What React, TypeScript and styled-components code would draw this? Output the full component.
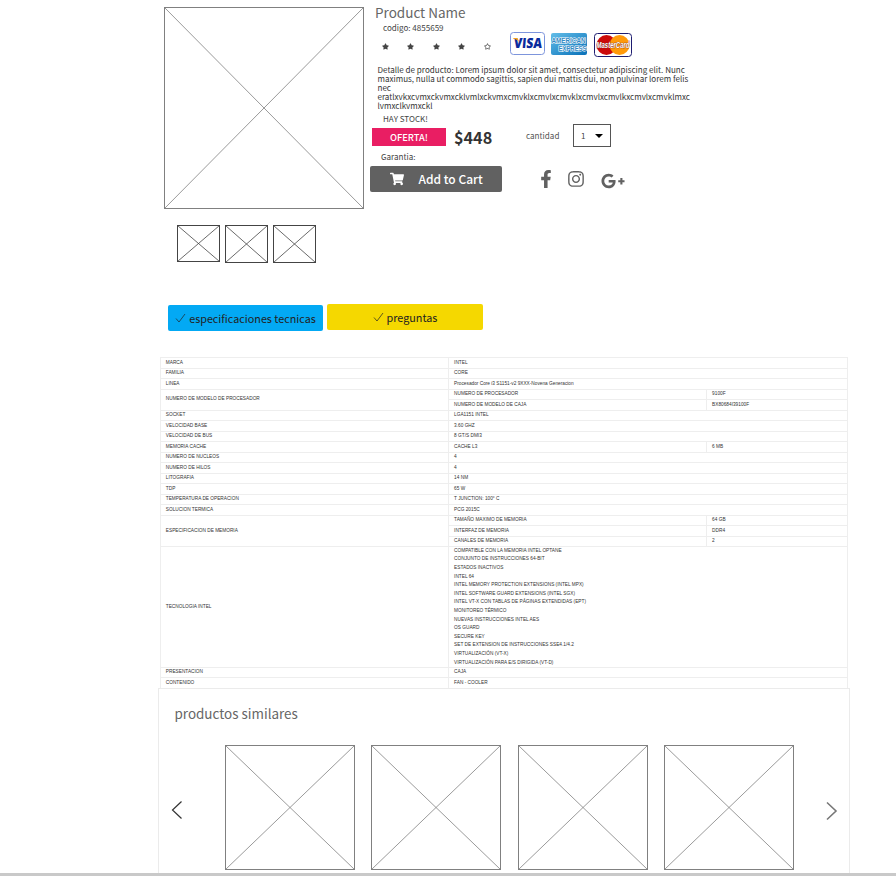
import React from "react";
import styled, { createGlobalStyle } from "styled-components";
import { FaFacebookF, FaInstagram, FaGooglePlusG, FaShoppingCart, FaStar, FaRegStar } from "react-icons/fa";

const sans = `"Noto Sans CJK SC", "Open Sans", sans-serif`;

const GlobalStyle = createGlobalStyle`
  * { box-sizing: border-box; }
  body { margin: 0; background: #fff; font-family: ${sans}; color: #333; overflow: hidden; }
`;

const Page = styled.main`
  width: 896px;
  height: 876px;
  display: flex;
  flex-direction: column;
  overflow: hidden;
  border-bottom: 3px solid #c9c9c9;
`;

const Product = styled.section`
  display: flex;
  height: 225px;
  padding-left: 164px;
`;

const Gallery = styled.div`
  width: 206px;
  padding-top: 7px;
  flex: none;
`;

const Info = styled.div`
  width: 330px;
  display: flex;
  flex-direction: column;
`;

const Sketch = styled.svg`
  display: block;
  flex: none;
  fill: none;
`;

const Title = styled.h1`
  margin: 0;
  padding-left: 5px;
  height: 23px;
  line-height: 24px;
  font-size: 13.5px;
  font-weight: 400;
  color: #666;
`;

const Note = styled.div<{ $indent: number; $height: number }>`
  flex: none;
  padding-left: ${(p) => p.$indent}px;
  height: ${(p) => p.$height}px;
  line-height: ${(p) => p.$height}px;
  font-size: 8.05px;
  color: #444;
  white-space: nowrap;
`;

const RatingRow = styled.div`
  display: flex;
  height: 32px;
  padding-left: 11.5px;
`;

const Stars = styled.div`
  display: flex;
  gap: 18.5px;
  width: 128.5px;
  padding-top: 9.5px;
  color: #444;
  svg { width: 7px; height: 7px; flex: none; }
`;

const Cards = styled.div`
  display: flex;
  align-items: flex-start;
  gap: 6px;
  margin-top: -1px;
  svg { flex: none; overflow: visible; }
`;

const Description = styled.p`
  margin: 0;
  padding: 0 0 0 7.5px;
  height: 47px;
  font-size: 8.05px;
  line-height: 9.1px;
  color: #333;
  white-space: nowrap;
`;

const Line = styled.span`
  display: block;
`;

const PriceRow = styled.div`
  display: flex;
  align-items: center;
  height: 24px;
  padding-left: 2px;
`;

const Offer = styled.div`
  width: 74px;
  height: 18px;
  line-height: 18px;
  background: #e91e63;
  color: #fff;
  text-align: center;
  font-size: 9.3px;
  font-weight: 500;
`;

const Price = styled.strong`
  width: 72px;
  padding-left: 8px;
  font-size: 16.2px;
  line-height: 20px;
  font-weight: 700;
  color: #333;
`;

const QuantityLabel = styled.label`
  width: 55px;
  padding-left: 8px;
  margin-top: -3px;
  font-size: 8.1px;
  color: #555;
`;

const Quantity = styled.div`
  display: flex;
  align-items: center;
  justify-content: space-between;
  width: 38px;
  height: 23px;
  margin-top: -3px;
  padding: 0 7px 0 7px;
  border: 1px solid #555;
  font-size: 8.1px;
  color: #444;
`;

const ActionRow = styled.div`
  display: flex;
  height: 28px;
  padding-top: 1px;
`;

const CartButton = styled.button`
  display: flex;
  align-items: center;
  gap: 14.5px;
  width: 132px;
  height: 26px;
  margin: 0 34.5px 0 0;
  padding: 0 0 0 20px;
  border: 0;
  border-radius: 2px;
  background: #616161;
  color: #fff;
  font: 500 12px ${sans};
  line-height: 26px;
  white-space: nowrap;
`;

const Social = styled.div`
  display: flex;
  align-items: center;
  gap: 12px;
  margin-top: -1px;
  color: #616161;
  svg { flex: none; }
  svg:last-child { margin: 4px 0 0 4.5px; }
`;

const Thumbs = styled.div`
  display: flex;
  gap: 5px;
  height: 79px;
  padding-left: 177px;
`;

const Tabs = styled.nav`
  display: flex;
  gap: 4px;
  height: 53px;
  padding-left: 168px;
`;

const Tab = styled.div<{ $color: string; $drop: number; $width: number }>`
  display: flex;
  align-items: center;
  justify-content: center;
  gap: 3px;
  width: ${(p) => p.$width}px;
  height: 26px;
  margin-top: ${(p) => p.$drop}px;
  border-radius: 2px;
  background: ${(p) => p.$color};
  color: #222;
  font-size: 10.8px;
  white-space: nowrap;
`;

const Specs = styled.div`
  display: grid;
  grid-template-columns: 288.3px 258px 141.7px;
  grid-template-rows: repeat(18, 10.5px) 120.6px repeat(2, 10.5px);
  width: 688.4px;
  height: 331px;
  flex: none;
  margin-left: 160px;
  border-right: 1px solid #eee;
  font: 4.75px "Liberation Sans", Arial, sans-serif;
  color: #333;
`;

const Cell = styled.div<{ $rows?: number; $cols?: number }>`
  grid-row: span ${(p) => p.$rows ?? 1};
  grid-column: span ${(p) => p.$cols ?? 1};
  display: flex;
  flex-direction: column;
  justify-content: center;
  padding: 0.3px 0 0 4.8px;
  border-top: 1px solid #eee;
  border-left: 1px solid #eee;
  line-height: 8.6px;
  white-space: nowrap;
`;

const Similar = styled.section`
  width: 692px;
  flex: 1;
  margin-left: 158px;
  border: 1px solid #ebebeb;
  border-width: 1px 1px 0;
`;

const SimilarTitle = styled.h2`
  margin: 0;
  padding-left: 15.5px;
  height: 55px;
  line-height: 48px;
  font-size: 13.45px;
  font-weight: 400;
  color: #666;
`;

const Carousel = styled.div`
  display: flex;
  align-items: center;
  height: 126px;
  padding-left: 10.5px;
`;

const Items = styled.div`
  display: flex;
  gap: 16.4px;
  margin: 0 30.5px 0 41.5px;
`;

const ArrowButton = styled.button`
  flex: none;
  margin: 6px 0 0;
  padding: 0;
  border: 0;
  background: none;
`;

function Placeholder({ w, h, color }: { w: number; h: number; color: string }) {
  return (
    <Sketch width={w} height={h} stroke={color}>
      <rect x=".5" y=".5" width={w - 1} height={h - 1} />
      <path d={`M.5 .5L${w - 0.5} ${h - 0.5}M${w - 0.5} .5L.5 ${h - 0.5}`} strokeWidth=".8" />
    </Sketch>
  );
}

function Arrow({ flip }: { flip?: boolean }) {
  return (
    <ArrowButton aria-label={flip ? "siguiente" : "anterior"}>
      <Sketch width="14" height="22" stroke={flip ? "#777" : "#333"} strokeWidth={flip ? 1.6 : 1.2}>
        <path d={flip ? "M2 3.5L11 12L2 20.5" : "M11.5 2.5L2.5 11L11.5 19.5"} />
      </Sketch>
    </ArrowButton>
  );
}

function Check() {
  return (
    <Sketch width="11" height="10" stroke="#222" strokeWidth=".7">
      <path d="M1 5.5L4 9L10 1" />
    </Sketch>
  );
}

function Visa() {
  return (
    <svg width="35" height="23">
      <rect x=".5" y=".5" width="34" height="22" rx="3" fill="#fff" stroke="#7d95dc" />
      <text x="4" y="16.3" textLength="28" lengthAdjust="spacingAndGlyphs" transform="skewX(-5) translate(1 0)" fontFamily="Open Sans, sans-serif" fontSize="14" fontWeight="800" fill="#0a2a9c">VISA</text>
      <path d="M3 6H7.5L9.5 10.5Q7 7 3 6.5Z" fill="#f7a21b" />
    </svg>
  );
}

function Amex() {
  return (
    <svg width="37" height="24">
      <defs>
        <linearGradient id="amex" x1="0" y1="0" x2="1" y2="1">
          <stop offset="0" stopColor="#62bde8" />
          <stop offset="1" stopColor="#0870b8" />
        </linearGradient>
      </defs>
      <rect x="0" y="1" width="36" height="22" rx="2" fill="url(#amex)" />
      <g fontFamily="Liberation Sans, sans-serif" fontSize="7" fontWeight="700" fill="#3189c4" stroke="#fff" strokeWidth="1.2" paintOrder="stroke">
        <text x=".5" y="11.3" textLength="34" lengthAdjust="spacingAndGlyphs">AMERICAN</text>
        <text x="7.5" y="18.6" textLength="28" lengthAdjust="spacingAndGlyphs">EXPRESS</text>
      </g>
    </svg>
  );
}

function MasterCard() {
  return (
    <svg width="38" height="25">
      <rect x=".5" y="1.5" width="37" height="23" rx="3" fill="#fff" stroke="#1d1c70" />
      <circle cx="12.5" cy="13" r="10" fill="#cc0a0a" />
      <circle cx="25.5" cy="13" r="10" fill="#ff9a0a" />
      <text x="2.5" y="16.2" textLength="33" lengthAdjust="spacingAndGlyphs" fontFamily="Liberation Sans, sans-serif" fontSize="8.5" fontWeight="700" fontStyle="italic" fill="#fff" stroke="#7a2320" strokeWidth=".7" paintOrder="stroke">MasterCard</text>
    </svg>
  );
}

const description = [
  "Detalle de producto: Lorem ipsum dolor sit amet, consectetur adipiscing elit. Nunc",
  "maximus, nulla ut commodo sagittis, sapien dui mattis dui, non pulvinar lorem felis",
  "nec",
  "eratlxvkxcvmxckvmxcklvmlxckvmxcmvklxcmvlxcmvklxcmvlxcmvlkxcmvlxcmvklmxc",
  "lvmxclkvmxckl",
];

const technologies = [
  "COMPATIBLE CON LA MEMORIA INTEL OPTANE",
  "CONJUNTO DE INSTRUCCIONES 64-BIT",
  "ESTADOS INACTIVOS",
  "INTEL 64",
  "INTEL MEMORY PROTECTION EXTENSIONS (INTEL MPX)",
  "INTEL SOFTWARE GUARD EXTENSIONS (INTEL SGX)",
  "INTEL VT-X CON TABLAS DE PÁGINAS EXTENDIDAS (EPT)",
  "MONITOREO TÉRMICO",
  "NUEVAS INSTRUCCIONES INTEL AES",
  "OS GUARD",
  "SECURE KEY",
  "SET DE EXTENSION DE INSTRUCCIONES SSE4.1/4.2",
  "VIRTUALIZACIÓN (VT-X)",
  "VIRTUALIZACIÓN PARA E/S DIRIGIDA (VT-D)",
];

type Spec = { name: string; values: string[][] };

const specs: Spec[] = [
  { name: "MARCA", values: [["INTEL"]] },
  { name: "FAMILIA", values: [["CORE"]] },
  { name: "LINEA", values: [["Procesador Core i3 S1151-v2 9XXX-Novena Generacion"]] },
  { name: "NUMERO DE MODELO DE PROCESADOR", values: [["NUMERO DE PROCESADOR", "9100F"], ["NUMERO DE MODELO DE CAJA", "BX80684I39100F"]] },
  { name: "SOCKET", values: [["LGA1151 INTEL"]] },
  { name: "VELOCIDAD BASE", values: [["3.60 GHZ"]] },
  { name: "VELOCIDAD DE BUS", values: [["8 GT/S DMI3"]] },
  { name: "MEMORIA CACHE", values: [["CACHE L3", "6 MB"]] },
  { name: "NUMERO DE NUCLEOS", values: [["4"]] },
  { name: "NUMERO DE HILOS", values: [["4"]] },
  { name: "LITOGRAFIA", values: [["14 NM"]] },
  { name: "TDP", values: [["65 W"]] },
  { name: "TEMPERATURA DE OPERACION", values: [["T JUNCTION: 100° C"]] },
  { name: "SOLUCION TERMICA", values: [["PCG 2015C"]] },
  { name: "ESPECIFICACION DE MEMORIA", values: [["TAMAÑO MAXIMO DE MEMORIA", "64 GB"], ["INTERFAZ DE MEMORIA", "DDR4"], ["CANALES DE MEMORIA", "2"]] },
  { name: "TECNOLOGIA INTEL", values: [[technologies.join("\n")]] },
  { name: "PRESENTACION", values: [["CAJA"]] },
  { name: "CONTENIDO", values: [["FAN - COOLER"]] },
];

export default function App() {
  return (
    <>
      <GlobalStyle />
      <Page>
        <Product>
          <Gallery>
            <Placeholder w={200} h={202} color="#808080" />
          </Gallery>
          <Info>
            <Title>Product Name</Title>
            <Note $indent={13} $height={10}>codigo: 4855659</Note>
            <RatingRow>
              <Stars>
                <FaStar /><FaStar /><FaStar /><FaStar /><FaRegStar />
              </Stars>
              <Cards><Visa /><Amex /><MasterCard /></Cards>
            </RatingRow>
            <Description>
              {description.map((line) => <Line key={line}>{line}</Line>)}
            </Description>
            <Note $indent={13} $height={13}>HAY STOCK!</Note>
            <PriceRow>
              <Offer>OFERTA!</Offer>
              <Price>$448</Price>
              <QuantityLabel>cantidad</QuantityLabel>
              <Quantity>
                1
                <svg width="8" height="4"><path d="M0 0H8L4 4Z" fill="#000" /></svg>
              </Quantity>
            </PriceRow>
            <Note $indent={11} $height={16}>Garantia:</Note>
            <ActionRow>
              <CartButton><FaShoppingCart size={14} />Add to Cart</CartButton>
              <Social>
                <FaFacebookF size={18} />
                <FaInstagram size={18} />
                <FaGooglePlusG size={24} />
              </Social>
            </ActionRow>
          </Info>
        </Product>
        <Thumbs>
          <Placeholder w={43} h={37} color="#444" />
          <Placeholder w={43} h={38} color="#444" />
          <Placeholder w={43} h={38} color="#444" />
        </Thumbs>
        <Tabs>
          <Tab $color="#03a9f4" $drop={1} $width={155}><Check />especificaciones tecnicas</Tab>
          <Tab $color="#f5d800" $drop={0} $width={156}><Check />preguntas</Tab>
        </Tabs>
        <Specs>
          {specs.map(({ name, values }) => (
            <React.Fragment key={name}>
              <Cell $rows={values.length}>{name}</Cell>
              {values.map(([first, second]) => (
                <React.Fragment key={first}>
                  <Cell $cols={second ? 1 : 2}>
                    {first.split("\n").map((line) => <span key={line}>{line}</span>)}
                  </Cell>
                  {second && <Cell>{second}</Cell>}
                </React.Fragment>
              ))}
            </React.Fragment>
          ))}
        </Specs>
        <Similar>
          <SimilarTitle>productos similares</SimilarTitle>
          <Carousel>
            <Arrow />
            <Items>
              {[1, 2, 3, 4].map((n) => <Placeholder key={n} w={130} h={125} color="#808080" />)}
            </Items>
            <Arrow flip />
          </Carousel>
        </Similar>
      </Page>
    </>
  );
}
